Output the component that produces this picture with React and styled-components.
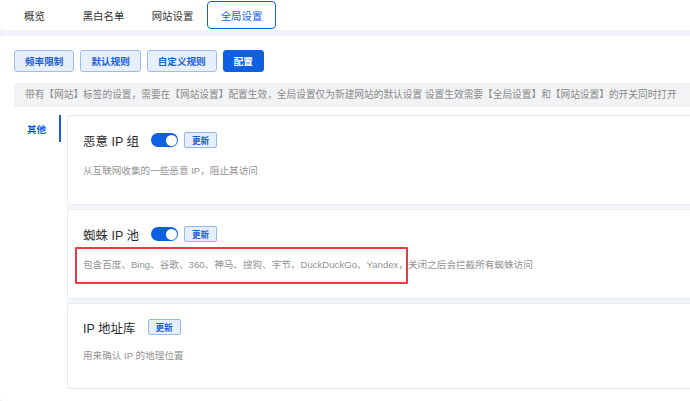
import React from 'react'
import styled, { createGlobalStyle, css } from 'styled-components'

const BLUE = '#0f5fe3'

const GlobalStyle = createGlobalStyle`
  body {
    margin: 0;
    background: #eff2f6;
    font-family: 'Liberation Sans', 'Noto Sans CJK SC', sans-serif;
    overflow: hidden;
  }
`

const Page = styled.div`
  width: 720px;
`

const TopBar = styled.div`
  display: flex;
  align-items: center;
  height: 30px;
  background: #fff;
  border-radius: 0 0 4px 4px;
  margin-bottom: 6px;
`

const Tab = styled.div`
  width: 69px;
  height: 28px;
  box-sizing: border-box;
  display: flex;
  align-items: center;
  justify-content: center;
  font-size: 10.4px;
  color: #333;
  border: 1px solid transparent;
  border-radius: 4px;
  ${(p) =>
    p.$active &&
    css`
      border-color: ${BLUE};
      color: ${BLUE};
    `}
`

const Panel = styled.div`
  background: #fff;
  border-radius: 4px;
  padding: 14px 0 10px 14px;
  min-height: 365px;
  box-sizing: border-box;
`

const ButtonRow = styled.div`
  display: flex;
  gap: 6px;
`

const Button = styled.div`
  height: 22px;
  box-sizing: border-box;
  padding: 0 10px;
  display: flex;
  align-items: center;
  font-size: 9.6px;
  font-weight: 600;
  border-radius: 3px;
  border: 1px solid #9bbcf2;
  background: #e7effd;
  color: #1c5fcf;
  ${(p) =>
    p.$primary &&
    css`
      background: ${BLUE};
      border-color: ${BLUE};
      color: #fff;
    `}
`

const Notice = styled.div`
  margin-top: 11px;
  height: 24px;
  line-height: 24px;
  padding: 0 11px;
  background: #f2f3f5;
  border-radius: 2px;
  font-size: 9.7px;
  color: #8a8a8a;
  white-space: nowrap;
`

const Body = styled.div`
  display: flex;
  gap: 6px;
  margin-top: 8px;
`

const SideNav = styled.div`
  width: 47px;
  flex-shrink: 0;
`

const NavItem = styled.div`
  height: 27px;
  display: flex;
  align-items: center;
  justify-content: center;
  border-right: 2px solid ${BLUE};
  color: ${BLUE};
  font-size: 9.6px;
  font-weight: 600;
`

const CardList = styled.div`
  flex: 1;
  display: flex;
  flex-direction: column;
  gap: 4px;
  background: #f2f5f9;
`

const Card = styled.div`
  height: ${(p) => (p.$short ? 86 : 90)}px;
  box-sizing: border-box;
  padding: ${(p) => (p.$short ? 15 : 16)}px 15px 0;
  background: #fff;
  border: 1px solid #e8ecf1;
  border-radius: 3px;
`

const TitleRow = styled.div`
  display: flex;
  align-items: center;
  height: 16px;
`

const Title = styled.span`
  font-size: 12.5px;
  color: #2b2b2b;
  margin-right: 12px;
  white-space: pre;
`

const Switch = styled.div`
  width: 27px;
  height: 14px;
  border-radius: 7px;
  background: ${BLUE};
  display: flex;
  align-items: center;
  justify-content: flex-end;
  padding: 0 1.5px;
  box-sizing: border-box;
  margin-right: 6px;

  &::after {
    content: '';
    width: 11px;
    height: 11px;
    border-radius: 50%;
    background: #fff;
  }
`

const Badge = styled.span`
  width: 33px;
  height: 16px;
  box-sizing: border-box;
  display: inline-flex;
  align-items: center;
  justify-content: center;
  font-size: 8.6px;
  font-weight: 700;
  color: #1c5fcf;
  background: #e7effd;
  border: 1px solid #94b8f0;
  border-radius: 2px;
`

const Desc = styled.div`
  margin-top: ${(p) => (p.$short ? 15 : 17)}px;
  line-height: 12px;
  font-size: 9.6px;
  color: #939393;
  white-space: nowrap;
`

const Marked = styled.span`
  position: relative;
  display: inline-block;

  &::after {
    content: '';
    position: absolute;
    left: -8px;
    right: 0;
    top: -12px;
    bottom: -13px;
    border: 2px solid #ec3b40;
    border-radius: 1px;
  }
`

const tabs = ['概览', '黑白名单', '网站设置', '全局设置']
const buttons = ['频率限制', '默认规则', '自定义规则', '配置']

export default function App() {
  return (
    <Page>
      <GlobalStyle />
      <TopBar>
        {tabs.map((t) => (
          <Tab key={t} $active={t === '全局设置'}>
            {t}
          </Tab>
        ))}
      </TopBar>
      <Panel>
        <ButtonRow>
          {buttons.map((b) => (
            <Button key={b} $primary={b === '配置'}>
              {b}
            </Button>
          ))}
        </ButtonRow>
        <Notice>
          带有【网站】标签的设置，需要在【网站设置】配置生效，全局设置仅为新建网站的默认设置 设置生效需要【全局设置】和【网站设置】的开关同时打开
        </Notice>
        <Body>
          <SideNav>
            <NavItem>其他</NavItem>
          </SideNav>
          <CardList>
            <Card>
              <TitleRow>
                <Title>恶意 IP 组</Title>
                <Switch />
                <Badge>更新</Badge>
              </TitleRow>
              <Desc>从互联网收集的一些恶意 IP，阻止其访问</Desc>
            </Card>
            <Card>
              <TitleRow>
                <Title>蜘蛛 IP 池</Title>
                <Switch />
                <Badge>更新</Badge>
              </TitleRow>
              <Desc>
                <Marked>包含百度、Bing、谷歌、360、神马、搜狗、字节、DuckDuckGo、Yandex，</Marked>
                关闭之后会拦截所有蜘蛛访问
              </Desc>
            </Card>
            <Card $short>
              <TitleRow>
                <Title>IP 地址库</Title>
                <Badge>更新</Badge>
              </TitleRow>
              <Desc $short>用来确认 IP 的地理位置</Desc>
            </Card>
          </CardList>
        </Body>
      </Panel>
    </Page>
  )
}
